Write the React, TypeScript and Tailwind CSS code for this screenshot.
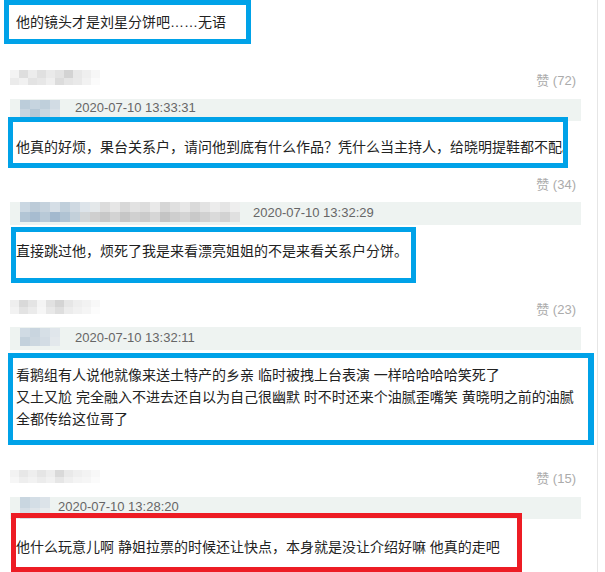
import React from 'react';

type MosaicProps = {
    rows: string[][];
    cw: number;
    ch: number;
    className?: string;
};

// pixelated blur used to hide user names / avatars
const Mosaic = ({ rows, cw, ch, className }: MosaicProps) => (
    <div className={`flex flex-col blur-[0.6px] ${className ?? ''}`}>
        {rows.map((row, i) => (
            <div key={i} className="flex">
                {row.map((c, j) => (
                    <div key={j} style={{ width: cw, height: ch, backgroundColor: c }} />
                ))}
            </div>
        ))}
    </div>
);

const grayName = [
    ['#f3f3f3', '#dedede', '#ececec', '#e0e0e0', '#eaeaea', '#e3e3e3', '#d3d3d3', '#e8e8e8', '#efefef', '#f7f7f7'],
    ['#ebebeb', '#f1f1f1', '#e3e3e3', '#e7e7e7', '#efefef', '#dcdcdc', '#e5e5e5', '#e9e9e9', '#f2f2f2', '#fbfbfb'],
];

const fromName = [
    ['#eeeeee', '#d9d9d9', '#e4e4e4', '#f4f4f4', '#e1e1e1', '#d4d4d4', '#e6e6e6', '#eeeeee', '#f2f2f2', '#f8f8f8'],
    ['#f2f2f2', '#e3e3e3', '#ebebeb', '#f6f6f6', '#e8e8e8', '#dedede', '#ececec', '#f1f1f1', '#f5f5f5', '#fcfcfc'],
];

const lastName = [
    ['#f2f2f2', '#e7e7e7', '#eeeeee', '#e5e5e5', '#ededed', '#d9d9d9', '#e9e9e9', '#efefef', '#f3f3f3', '#f8f8f8'],
    ['#f6f6f6', '#eeeeee', '#f2f2f2', '#ececec', '#f1f1f1', '#e6e6e6', '#efefef', '#f4f4f4', '#f6f6f6', '#fbfbfb'],
];

const avatarA = [
    ['#bccdda', '#c6d4df', '#bfcfdb', '#d2dce4'],
    ['#c8d5e0', '#b6c8d6', '#cad7e1', '#d8e0e7'],
];

const avatarB = [
    ['#d0dbe4', '#c9d5df', '#d6dfe6', '#e0e6eb'],
    ['#c3d1dc', '#ccd7e0', '#d3dce4', '#e3e8ec'],
];

const avatarC = [
    ['#c9d6e0', '#d4dee6', '#dce3e9'],
    ['#d5dee6', '#dfe5ea', '#e7ebee'],
];

const longName = [
    ['#cad7e2', '#bccbd8', '#c5d2dd', '#d5dee6', '#c0cfdb', '#cfd9e2', '#dde4ea', '#e4e8ea', '#dcdcdc', '#e6e6e6', '#d8d8d8', '#e2e2e2', '#dddddd', '#e9e9e9', '#d6d6d6', '#e0e0e0', '#e7e7e7', '#dadada', '#e3e3e3', '#ececec', '#e5e5e5', '#eeeeee'],
    ['#b2c5d5', '#a7bcd0', '#b8c9d7', '#a3b9ce', '#b0c3d3', '#c3d0da', '#d2d6d8', '#cfcfcf', '#c8c8c8', '#d3d3d3', '#c6c6c6', '#d0d0d0', '#cbcbcb', '#d6d6d6', '#c4c4c4', '#cecece', '#d4d4d4', '#c9c9c9', '#d1d1d1', '#dadada', '#d2d2d2', '#e0e0e0'],
];

const cjk = "font-['Liberation_Sans','Noto_Sans_CJK_SC',sans-serif]";
const latin = "font-['Liberation_Sans',Arial,sans-serif]";

const Likes = ({ n }: { n: number }) => (
    <span className={`${cjk} text-[13px] leading-[22px] text-[#ababab]`}>赞 ({n})</span>
);

const Stamp = ({ t, className }: { t: string; className?: string }) => (
    <span className={`${latin} text-[13px] leading-[18px] text-[#666666] ${className ?? ''}`}>{t}</span>
);

export default function App() {
    return (
        <div className="flex w-[605px] h-[572px] overflow-hidden bg-white">
            <div className="flex flex-col w-[598px] shrink-0 border-r border-[#e6e6e6]">
                {/* previous comment body */}
                <div className={`ml-[4px] w-[247px] h-[44px] shrink-0 border-[5px] border-[#00a2e8] pl-[7px] flex items-center ${cjk} text-[14px] text-[#222] whitespace-nowrap overflow-hidden`}>
                    他的镜头才是刘星分饼吧……无语
                </div>

                {/* comment: 72 */}
                <div className="mt-[26px] h-[22px] shrink-0 flex justify-between items-start pl-[10px] pr-[21px]">
                    <Mosaic rows={grayName} cw={9} ch={7.5} />
                    <Likes n={72} />
                </div>
                <div className="mt-[7px] ml-[10px] w-[571px] h-[22px] shrink-0 bg-[#eef3f1] flex items-start pl-[10px]">
                    <Mosaic rows={avatarA} cw={10} ch={8.5} className="mt-[1px]" />
                    <Stamp t="2020-07-10 13:33:31" className="ml-[15px]" />
                </div>
                <div className={`relative -mt-[4px] ml-[8px] w-[560px] h-[51px] shrink-0 border-[5px] border-[#00a2e8] pl-[3px] pt-[15px] ${cjk} text-[14px] leading-[20px] text-[#222] whitespace-nowrap overflow-hidden`}>
                    他真的好烦，果台关系户，请问他到底有什么作品？凭什么当主持人，给晓明提鞋都不配。
                </div>

                {/* comment: 34 */}
                <div className="mt-[6px] h-[22px] shrink-0 flex justify-end pr-[21px]">
                    <Likes n={34} />
                </div>
                <div className="mt-[6px] ml-[10px] w-[571px] h-[23px] shrink-0 bg-[#eef3f1] flex items-start pl-[10px]">
                    <Mosaic rows={longName} cw={10} ch={10} />
                    <Stamp t="2020-07-10 13:32:29" className="ml-[13px] mt-[2px]" />
                </div>
                <div className={`relative mt-[2px] ml-[11px] w-[405px] h-[56px] shrink-0 border-[5px] border-[#00a2e8] pt-[9px] ${cjk} text-[14px] leading-[20px] text-[#222] whitespace-nowrap overflow-hidden`}>
                    直接跳过他，烦死了我是来看漂亮姐姐的不是来看关系户分饼。
                </div>

                {/* comment: 23 */}
                <div className="mt-[16px] h-[22px] shrink-0 flex justify-between items-start pl-[10px] pr-[21px]">
                    <Mosaic rows={fromName} cw={9} ch={7} className="mt-[1px]" />
                    <Likes n={23} />
                </div>
                <div className="mt-[6px] ml-[10px] w-[571px] h-[23px] shrink-0 bg-[#eef3f1] flex items-start pl-[10px]">
                    <Mosaic rows={avatarB} cw={10} ch={9} className="mt-[1px]" />
                    <Stamp t="2020-07-10 13:32:11" className="ml-[15px] mt-[2px]" />
                </div>
                <div className={`relative mt-[3px] ml-[8px] w-[586px] h-[92px] shrink-0 border-[5px] border-r-[6px] border-[#00a2e8] pl-[3px] pt-[6px] ${cjk} text-[14px] leading-[22px] text-[#222] whitespace-nowrap overflow-hidden`}>
                    <div>看鹅组有人说他就像来送土特产的乡亲 临时被拽上台表演 一样哈哈哈哈笑死了</div>
                    <div>又土又尬 完全融入不进去还自以为自己很幽默 时不时还来个油腻歪嘴笑 黄晓明之前的油腻</div>
                    <div>全都传给这位哥了</div>
                </div>

                {/* comment: 15 */}
                <div className="mt-[23px] h-[22px] shrink-0 flex justify-between items-start pl-[10px] pr-[21px]">
                    <Mosaic rows={lastName} cw={9} ch={6.5} className="mt-[2px]" />
                    <Likes n={15} />
                </div>
                <div className="mt-[7px] ml-[10px] w-[571px] h-[22px] shrink-0 bg-[#eef3f1] flex items-start pl-[10px]">
                    <Mosaic rows={avatarC} cw={10} ch={11} />
                    <Stamp t="2020-07-10 13:28:20" className="ml-[8px] mt-[1px]" />
                </div>
                <div className={`relative -mt-[6px] ml-[11px] w-[511px] h-[59px] shrink-0 border-[5px] border-[#ed1c24] pt-[19px] ${cjk} text-[14px] leading-[20px] text-[#222] whitespace-nowrap overflow-hidden`}>
                    他什么玩意儿啊 静姐拉票的时候还让快点，本身就是没让介绍好嘛 他真的走吧
                </div>
            </div>
            <div className="flex-1 bg-white" />
        </div>
    );
}
